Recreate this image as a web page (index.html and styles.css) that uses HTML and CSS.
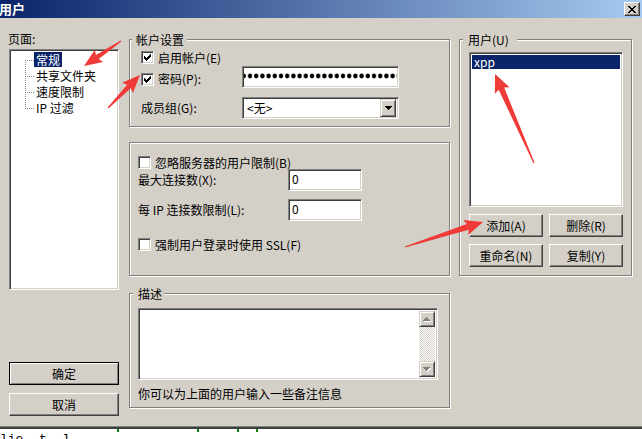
FILE: index.html
```html
<!DOCTYPE html>
<html lang="zh-CN">
<head>
<meta charset="utf-8">
<title>用户</title>
<link rel="stylesheet" href="styles.css">
</head>
<body>
<div class="window">
  <div class="titlebar">
    <span class="title">用户</span>
    <span class="close-btn">
      <svg width="8" height="7" viewBox="0 0 8 7"><path fill="#000" d="M0 0h2v1H0z M6 0h2v1H6z M1 1h2v1H1z M5 1h2v1H5z M2 2h4v1H2z M3 3h2v1H3z M2 4h4v1H2z M1 5h2v1H1z M5 5h2v1H5z M0 6h2v1H0z M6 6h2v1H6z"/></svg>
    </span>
  </div>
  <div class="content">
    <div class="col-left">
      <div class="page-label">页面:</div>
      <div class="tree sunken">
        <ul class="tree-list">
          <li class="first"><span class="branch"></span><span class="node selected">常规</span></li>
          <li><span class="branch"></span><span class="node">共享文件夹</span></li>
          <li><span class="branch"></span><span class="node">速度限制</span></li>
          <li class="last"><span class="branch"></span><span class="node">IP 过滤</span></li>
        </ul>
      </div>
      <button class="btn btn-default btn-ok">确定</button>
      <button class="btn btn-cancel">取消</button>
    </div>

    <div class="col-mid">
      <div class="group g-account">
        <div class="legend legend-account">帐户设置</div>
        <div class="row a-r1">
          <span class="cb"><svg width="7" height="7" viewBox="0 0 7 7"><path fill="#000" d="M6 0h1v1H6z M5 1h2v1H5z M0 2h1v1H0z M4 2h3v1H4z M0 3h2v1H0z M3 3h3v1H3z M0 4h5v1H0z M1 5h3v1H1z M2 6h1v1H2z"/></svg></span>
          <span class="cb-label">启用帐户(E)</span>
        </div>
        <div class="row a-r2">
          <div class="label-cell w101 pw-label">
            <span class="cb"><svg width="7" height="7" viewBox="0 0 7 7"><path fill="#000" d="M6 0h1v1H6z M5 1h2v1H5z M0 2h1v1H0z M4 2h3v1H4z M0 3h2v1H0z M3 3h3v1H3z M0 4h5v1H0z M1 5h3v1H1z M2 6h1v1H2z"/></svg></span>
            <span class="cb-label">密码(P):</span>
          </div>
          <div class="password sunken">
            <svg class="pw-dots" width="153" height="18" viewBox="0 0 153 18">
              <defs>
                <pattern id="pwdot" x="2.9" y="0" width="6.2" height="18" patternUnits="userSpaceOnUse">
                  <ellipse cx="3.1" cy="8" rx="2.2" ry="2.4" fill="#000"/>
                </pattern>
              </defs>
              <rect width="153" height="18" fill="url(#pwdot)"/>
            </svg>
          </div>
        </div>
        <div class="row a-r3">
          <span class="label-cell w101">成员组(G):</span>
          <div class="select sunken">
            <span class="select-text">&lt;无&gt;</span>
            <span class="drop-btn"><svg width="7" height="4" viewBox="0 0 7 4"><path fill="#000" d="M0 0h7v1H0z M1 1h5v1H1z M2 2h3v1H2z M3 3h1v1H3z"/></svg></span>
          </div>
        </div>
      </div>

      <div class="group g-limits">
        <div class="row l-r1">
          <span class="cb"></span>
          <span class="cb-label">忽略服务器的用户限制(B)</span>
        </div>
        <div class="row l-r2">
          <span class="label-cell w150">最大连接数(X):</span>
          <div class="edit sunken">0</div>
        </div>
        <div class="row l-r3">
          <span class="label-cell w150">每 IP 连接数限制(L):</span>
          <div class="edit sunken">0</div>
        </div>
        <div class="row l-r4">
          <span class="cb"></span>
          <span class="cb-label">强制用户登录时使用 SSL(F)</span>
        </div>
      </div>

      <div class="group g-desc">
        <div class="legend legend-desc">描述</div>
        <div class="memo sunken">
          <div class="memo-text"></div>
          <div class="vscroll">
            <span class="sb-btn"><svg width="8" height="5" viewBox="0 0 8 5"><path fill="#fff" d="M4 1h1v1H4z M3 2h3v1H3z M2 3h5v1H2z M1 4h7v1H1z"/><path fill="#808080" d="M3 0h1v1H3z M2 1h3v1H2z M1 2h5v1H1z M0 3h7v1H0z"/></svg></span>
            <span class="sb-track"></span>
            <span class="sb-btn"><svg width="8" height="5" viewBox="0 0 8 5"><path fill="#fff" d="M1 1h7v1H1z M2 2h5v1H2z M3 3h3v1H3z M4 4h1v1H4z"/><path fill="#808080" d="M0 0h7v1H0z M1 1h5v1H1z M2 2h3v1H2z M3 3h1v1H3z"/></svg></span>
          </div>
        </div>
        <div class="hint">你可以为上面的用户输入一些备注信息</div>
      </div>
    </div>

    <div class="col-right">
      <div class="group g-users">
        <div class="legend legend-users">用户(U)</div>
        <div class="userlist sunken">
          <div class="user selected">xpp</div>
        </div>
        <div class="user-buttons">
          <button class="btn">添加(A)</button>
          <button class="btn">删除(R)</button>
          <button class="btn">重命名(N)</button>
          <button class="btn">复制(Y)</button>
        </div>
      </div>
    </div>
  </div>
</div>
<div class="under">
  <div class="marks"><span class="mark m1"></span><span class="mark m2"></span><span class="mark m3"></span><span class="mark m4"></span></div>
  <div class="under-text">lie&nbsp;&nbsp;t&nbsp;&nbsp;l</div>
</div>

<svg class="annotations" width="642" height="439" viewBox="0 0 642 439">
  <g fill="#ef3b38">
    <polygon transform="translate(121 41) rotate(145.96)" points="0,-0.6 28.6,-2.5 26.6,-7.5 44.6,0 26.6,7.5 28.6,2.5 0,0.6"/>
    <polygon transform="translate(108 108) rotate(-45.88)" points="0,-0.6 30,-2.5 28,-7.5 46,0 28,7.5 30,2.5 0,0.6"/>
    <polygon transform="translate(534 163) rotate(-113.66)" points="0,-0.6 81.2,-3 79.2,-8 97.2,0 79.2,8 81.2,3 0,0.6"/>
    <polygon transform="translate(405 247) rotate(-17.77)" points="0,-0.6 65.9,-3 63.9,-8 81.9,0 63.9,8 65.9,3 0,0.6"/>
  </g>
</svg>
</body>
</html>
```

FILE: styles.css
```css
* { box-sizing: border-box; }
html, body { margin: 0; padding: 0; }
body {
  width: 642px;
  height: 439px;
  overflow: hidden;
  position: relative;
  background: #fff;
  font-family: "Noto Sans CJK SC", "Liberation Sans", sans-serif;
  font-size: 12px;
  line-height: 16px;
  color: #000;
}

.window {
  height: 429px;
  background: #d4d0c8;
  border-bottom: 2px solid #404040;
  box-shadow: inset 0 -1px 0 #808080;
  display: flex;
  flex-direction: column;
}

.titlebar {
  height: 18px;
  flex: none;
  display: flex;
  align-items: center;
  justify-content: space-between;
  padding-right: 2px;
  background: linear-gradient(to right, #0a246a, #a6caf0);
}
.title {
  color: #fff;
  font-weight: bold;
  font-size: 13px;
  line-height: 16px;
  margin-left: -1px;
}
.close-btn {
  width: 16px;
  height: 14px;
  display: flex;
  align-items: center;
  justify-content: center;
  background: #d4d0c8;
  border: 1px solid;
  border-color: #fff #404040 #404040 #fff;
  box-shadow: inset -1px -1px 0 #808080;
}
.close-btn svg { display: block; }

.content {
  flex: 1;
  display: flex;
  align-items: flex-start;
  padding: 21px 0 0 9px;
}

/* sunken field look */
.sunken {
  background: #fff;
  border: 1px solid;
  border-color: #808080 #fff #fff #808080;
  box-shadow: inset 1px 1px 0 #404040, inset -1px -1px 0 #d4d0c8;
}

/* left column */
.col-left {
  width: 110px;
  margin-right: 10px;
  display: flex;
  flex-direction: column;
}
.page-label {
  height: 16px;
  margin-top: -8px;
  margin-left: -1px;
}
.tree {
  margin-top: 2px;
  height: 241px;
  padding: 2px;
}
.tree-list {
  list-style: none;
  margin: 0;
  padding: 0 0 0 13px;
}
.tree-list li {
  height: 16px;
  display: flex;
  align-items: flex-start;
}
.branch {
  width: 9px;
  height: 16px;
  flex: none;
  background:
    repeating-linear-gradient(to right, #808080 0 1px, transparent 1px 2px) 0 8px / 9px 1px no-repeat,
    repeating-linear-gradient(to bottom, #808080 0 1px, transparent 1px 2px) 0 0 / 1px 16px no-repeat;
}
.tree-list li.first .branch {
  background:
    repeating-linear-gradient(to right, #808080 0 1px, transparent 1px 2px) 0 8px / 9px 1px no-repeat,
    repeating-linear-gradient(to bottom, #808080 0 1px, transparent 1px 2px) 0 8px / 1px 8px no-repeat;
}
.tree-list li.last .branch {
  background:
    repeating-linear-gradient(to right, #808080 0 1px, transparent 1px 2px) 0 8px / 9px 1px no-repeat,
    repeating-linear-gradient(to bottom, #808080 0 1px, transparent 1px 2px) 0 0 / 1px 9px no-repeat;
}
.node {
  height: 15px;
  line-height: 15px;
  padding: 0 2px;
  white-space: nowrap;
}
.node.selected { background: #0a246a; color: #fff; }

.btn {
  font: inherit;
  color: #000;
  height: 23px;
  padding: 0;
  background: #d4d0c8;
  border: 1px solid;
  border-color: #fff #404040 #404040 #fff;
  box-shadow: inset -1px -1px 0 #808080;
  display: flex;
  align-items: center;
  justify-content: center;
}
.btn-default {
  border-color: #000;
  box-shadow: inset 1px 1px 0 #fff, inset -1px -1px 0 #808080;
}
.btn-ok { margin-top: 72px; width: 110px; }
.btn-cancel { margin-top: 8px; width: 110px; }

/* group boxes */
.group {
  border: 1px solid #808080;
  box-shadow: inset 1px 1px 0 #fff, 1px 1px 0 #fff;
  display: flex;
  flex-direction: column;
  align-items: flex-start;
}
.legend {
  height: 16px;
  margin-top: -8px;
  background: #d4d0c8;
  white-space: nowrap;
}
.row { display: flex; align-items: center; }
.cb {
  width: 13px;
  height: 13px;
  flex: none;
  background: #fff;
  border: 1px solid;
  border-color: #808080 #fff #fff #808080;
  box-shadow: inset 1px 1px 0 #404040, inset -1px -1px 0 #d4d0c8;
  display: flex;
  align-items: center;
  justify-content: center;
}
.cb svg { display: block; }
.cb-label { margin-left: 4px; white-space: nowrap; }
.label-cell { flex: none; white-space: nowrap; display: flex; align-items: center; }
.w101 { width: 101px; }
.w150 { width: 150px; }

.col-mid {
  width: 321px;
  margin-right: 9px;
  display: flex;
  flex-direction: column;
}
.g-account { padding: 0 0 7px 11px; height: 88px; }
.legend-account { margin-left: -9px; padding: 0 3px 0 4px; }
.a-r1 { margin-top: 3px; height: 13px; }
.a-r2 { margin-top: 2px; height: 22px; }
.pw-label { padding-top: 4px; }
.password {
  width: 157px;
  height: 22px;
  padding: 1px;
  overflow: hidden;
}
.pw-dots { display: block; }
.a-r3 { margin-top: 9px; height: 22px; }
.select {
  width: 157px;
  height: 22px;
  padding: 1px;
  display: flex;
  align-items: center;
}
.select-text { flex: 1; padding-left: 3px; }
.drop-btn {
  width: 16px;
  height: 18px;
  margin-right: 1px;
  background: #d4d0c8;
  border: 1px solid;
  border-color: #d4d0c8 #404040 #404040 #d4d0c8;
  box-shadow: inset 1px 1px 0 #fff, inset -1px -1px 0 #808080;
  display: flex;
  align-items: center;
  justify-content: center;
}
.drop-btn svg { display: block; }

.g-limits { margin-top: 15px; padding: 13px 8px 24px 8px; height: 134px; }
.l-r1 { height: 13px; }
.l-r2 { height: 22px; }
.l-r3 { margin-top: 8px; height: 22px; }
.l-r4 { margin-top: 17px; height: 13px; }
.edit {
  width: 74px;
  height: 22px;
  padding: 1px 3px 0 3px;
  line-height: 16px;
}

.g-desc { margin-top: 17px; padding: 0 10px 5px 8px; height: 115px; }
.legend-desc { margin-left: -5px; padding: 0 2px 0 5px; }
.memo {
  margin-top: 6px;
  width: 300px;
  height: 72px;
  padding: 2px;
  display: flex;
}
.memo-text { flex: 1; }
.vscroll {
  width: 16px;
  display: flex;
  flex-direction: column;
}
.sb-btn {
  width: 16px;
  height: 16px;
  flex: none;
  background: #d4d0c8;
  border: 1px solid;
  border-color: #d4d0c8 #404040 #404040 #d4d0c8;
  box-shadow: inset 1px 1px 0 #fff, inset -1px -1px 0 #808080;
  display: flex;
  align-items: center;
  justify-content: center;
}
.sb-btn svg { display: block; }
.sb-track {
  flex: 1;
  background: conic-gradient(#fff 25%, #d4d0c8 0 50%, #fff 0 75%, #d4d0c8 0) 0 0 / 2px 2px;
}
.hint { margin-top: 6px; height: 16px; white-space: nowrap; }

/* right column */
.col-right { width: 173px; }
.g-users { padding: 0 8px 8px 9px; height: 237px; }
.legend-users { margin-left: -6px; padding: 0 8px 0 5px; }
.userlist {
  margin-top: 4px;
  width: 154px;
  height: 155px;
  padding: 2px;
}
.user {
  height: 14px;
  line-height: 14px;
  padding-left: 2px;
}
.user.selected { background: #0a246a; color: #fff; }
.user-buttons {
  margin-top: 7px;
  display: grid;
  grid-template-columns: 74px 74px;
  column-gap: 6px;
  row-gap: 7px;
}
.user-buttons .btn { width: 74px; }

/* strip of the window underneath */
.under {
  height: 10px;
  overflow: hidden;
}
.marks { height: 3px; display: flex; }
.mark { width: 2px; height: 3px; background: #108010; }
.m1 { margin-left: 117px; }
.m2 { margin-left: 78px; }
.m3 { margin-left: 38px; }
.m4 { margin-left: 17px; }
.under-text {
  font-family: "Liberation Mono", monospace;
  font-size: 13px;
  line-height: 14px;
  padding-top: 1px;
  white-space: nowrap;
}

.annotations {
  position: absolute;
  left: 0;
  top: 0;
  pointer-events: none;
}
```
